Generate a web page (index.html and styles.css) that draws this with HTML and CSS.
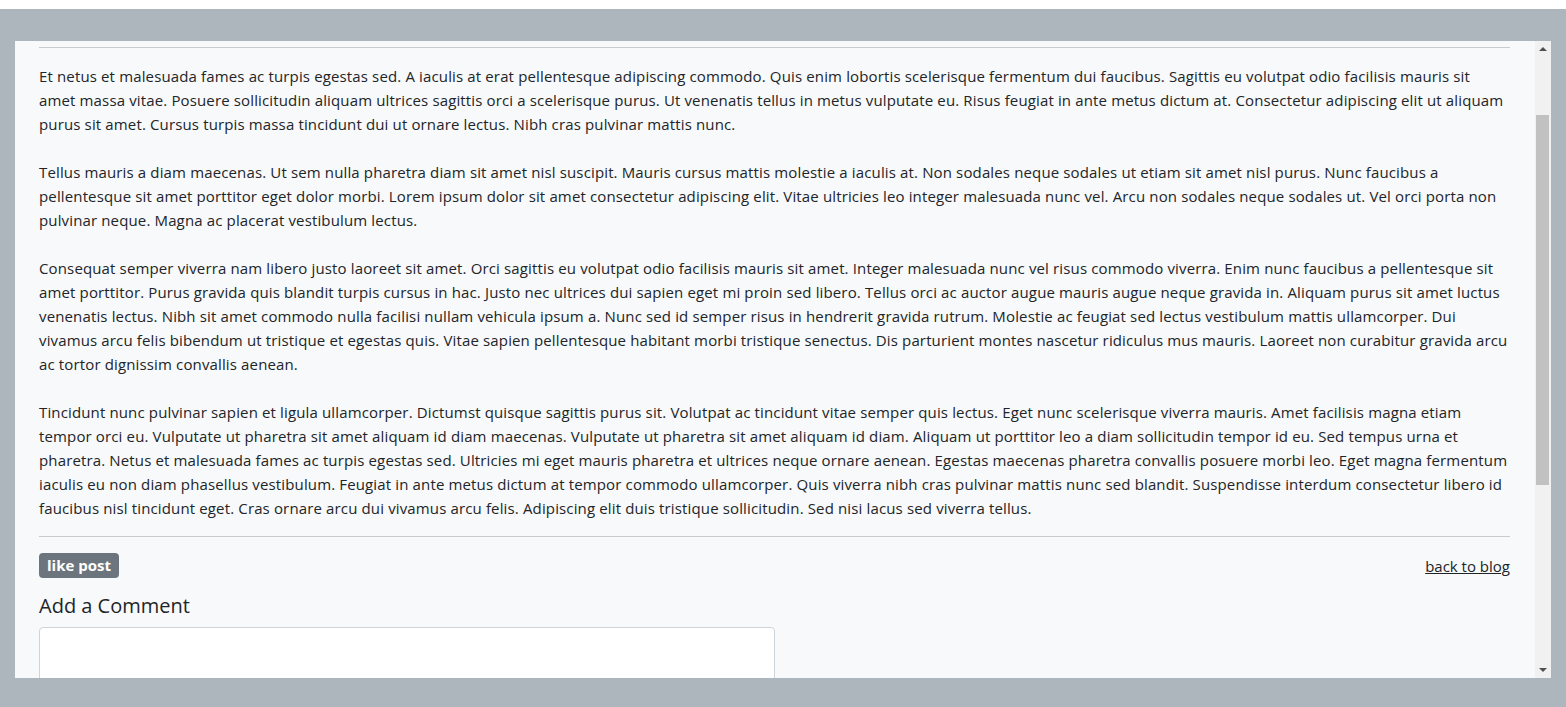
FILE: index.html
```html
<!DOCTYPE html>
<html lang="en">
<head>
<meta charset="utf-8">
<title>Blog Post</title>
<link rel="stylesheet" href="styles.css">
</head>
<body>
<main class="blog-wrap">
  <div class="post-panel">
    <article class="post-scroll" id="postScroll">
      <header class="post-header">
        <h2 class="post-title">Lorem Ipsum Dolor</h2>
        <div class="post-meta">Posted on March 12 by admin</div>
      </header>
      <hr class="rule" id="topRule">
      <div class="post-body">
        <p>Et netus et malesuada fames ac turpis egestas sed. A iaculis at erat pellentesque adipiscing commodo. Quis enim lobortis scelerisque fermentum dui faucibus. Sagittis eu volutpat odio facilisis mauris sit amet massa vitae. Posuere sollicitudin aliquam ultrices sagittis orci a scelerisque purus. Ut venenatis tellus in metus vulputate eu. Risus feugiat in ante metus dictum at. Consectetur adipiscing elit ut aliquam purus sit amet. Cursus turpis massa tincidunt dui ut ornare lectus. Nibh cras pulvinar mattis nunc.</p>
        <p>Tellus mauris a diam maecenas. Ut sem nulla pharetra diam sit amet nisl suscipit. Mauris cursus mattis molestie a iaculis at. Non sodales neque sodales ut etiam sit amet nisl purus. Nunc faucibus a pellentesque sit amet porttitor eget dolor morbi. Lorem ipsum dolor sit amet consectetur adipiscing elit. Vitae ultricies leo integer malesuada nunc vel. Arcu non sodales neque sodales ut. Vel orci porta non pulvinar neque. Magna ac placerat vestibulum lectus.</p>
        <p>Consequat semper viverra nam libero justo laoreet sit amet. Orci sagittis eu volutpat odio facilisis mauris sit amet. Integer malesuada nunc vel risus commodo viverra. Enim nunc faucibus a pellentesque sit amet porttitor. Purus gravida quis blandit turpis cursus in hac. Justo nec ultrices dui sapien eget mi proin sed libero. Tellus orci ac auctor augue mauris augue neque gravida in. Aliquam purus sit amet luctus venenatis lectus. Nibh sit amet commodo nulla facilisi nullam vehicula ipsum a. Nunc sed id semper risus in hendrerit gravida rutrum. Molestie ac feugiat sed lectus vestibulum mattis ullamcorper. Dui vivamus arcu felis bibendum ut tristique et egestas quis. Vitae sapien pellentesque habitant morbi tristique senectus. Dis parturient montes nascetur ridiculus mus mauris. Laoreet non curabitur gravida arcu ac tortor dignissim convallis aenean.</p>
        <p>Tincidunt nunc pulvinar sapien et ligula ullamcorper. Dictumst quisque sagittis purus sit. Volutpat ac tincidunt vitae semper quis lectus. Eget nunc scelerisque viverra mauris. Amet facilisis magna etiam tempor orci eu. Vulputate ut pharetra sit amet aliquam id diam maecenas. Vulputate ut pharetra sit amet aliquam id diam. Aliquam ut porttitor leo a diam sollicitudin tempor id eu. Sed tempus urna et pharetra. Netus et malesuada fames ac turpis egestas sed. Ultricies mi eget mauris pharetra et ultrices neque ornare aenean. Egestas maecenas pharetra convallis posuere morbi leo. Eget magna fermentum iaculis eu non diam phasellus vestibulum. Feugiat in ante metus dictum at tempor commodo ullamcorper. Quis viverra nibh cras pulvinar mattis nunc sed blandit. Suspendisse interdum consectetur libero id faucibus nisl tincidunt eget. Cras ornare arcu dui vivamus arcu felis. Adipiscing elit duis tristique sollicitudin. Sed nisi lacus sed viverra tellus.</p>
      </div>
      <hr class="rule">
      <div class="post-actions">
        <button class="like-badge" type="button">like post</button>
        <a class="back-link" href="#">back to blog</a>
      </div>
      <section class="comment-form">
        <h5 class="comment-title">Add a Comment</h5>
        <textarea class="comment-input" rows="5"></textarea>
        <button class="comment-submit" type="button">Submit</button>
      </section>
      <section class="comments">
        <h5 class="comment-title">Comments</h5>
        <p class="no-comments">No comments yet.</p>
      </section>
    </article>
    <div class="scrollbar" aria-hidden="true">
      <div class="sb-btn"><span class="sb-arrow sb-up"></span></div>
      <div class="sb-track"><div class="sb-thumb"></div></div>
      <div class="sb-btn"><span class="sb-arrow sb-down"></span></div>
    </div>
  </div>
</main>
<script src="script.js"></script>
</body>
</html>
```
FILE: styles.css
```css
* { box-sizing: border-box; }
html, body { margin: 0; }
body {
  background: #ffffff;
  padding-top: 9px;
  font-family: "Open Sans", "Liberation Sans", sans-serif;
  font-size: 15px;
  line-height: 1.6;
  color: #212529;
}
.blog-wrap {
  background: #adb5bd;
  padding: 32px 15px 29px;
}
.post-panel {
  display: flex;
  height: 637px;
  background: #f8f9fa;
}
.post-scroll {
  position: relative;
  flex: 1;
  min-width: 0;
  overflow-y: auto;
  scrollbar-width: none;
  padding: 24px 25px 24px 24px;
}
.post-scroll::-webkit-scrollbar { display: none; }
.post-title {
  margin: 0 0 8px;
  font-size: 32px;
  font-weight: 500;
  line-height: 1.2;
}
.post-meta { color: #6c757d; }
.rule {
  margin: 16px 0;
  border: 0;
  border-top: 1px solid #c8cacc;
  height: 0;
}
.post-body p { margin: 0 0 24px; letter-spacing: 0.14px; }
.post-body p:last-child { margin-bottom: 16px; }
.post-actions {
  display: flex;
  justify-content: space-between;
  align-items: center;
  height: 25px;
}
.like-badge {
  font-family: inherit;
  font-size: 15px;
  font-weight: 700;
  line-height: 25px;
  height: 25px;
  padding: 0 8px;
  border: 0;
  border-radius: 4px;
  background: #6c757d;
  color: #fff;
}
.back-link {
  color: #212529;
  text-decoration: underline;
}
.comment-form { margin-top: 16px; }
.comment-title {
  margin: 0 0 9px;
  font-size: 20px;
  font-weight: 400;
  line-height: 1.2;
}
.comment-input {
  display: block;
  width: 50%;
  height: 140px;
  border: 1px solid #ced4da;
  border-radius: 4px;
  background: #fff;
  resize: vertical;
  font-family: inherit;
  font-size: 15px;
}
.comment-submit {
  margin-top: 12px;
  font-family: inherit;
  font-size: 15px;
  padding: 6px 12px;
  border: 0;
  border-radius: 4px;
  background: #6c757d;
  color: #fff;
}
.comments { margin-top: 24px; }
.no-comments { margin: 0; color: #6c757d; }

.scrollbar {
  display: flex;
  flex-direction: column;
  width: 16px;
  flex: 0 0 16px;
  background: #f1f1f1;
}
.sb-btn {
  height: 16px;
  display: flex;
  align-items: center;
  justify-content: center;
}
.sb-arrow {
  width: 0;
  height: 0;
  border-left: 4px solid transparent;
  border-right: 4px solid transparent;
}
.sb-up { border-bottom: 4px solid #505050; }
.sb-down { border-top: 4px solid #505050; }
.sb-track {
  flex: 1;
  padding: 58px 2px 0 1px;
}
.sb-thumb {
  height: 370px;
  background: #c1c1c1;
}
```
FILE: script.js
```js
(function () {
  var scroller = document.getElementById('postScroll');
  var rule = document.getElementById('topRule');
  scroller.scrollTop = rule.offsetTop - 6;
})();
```
